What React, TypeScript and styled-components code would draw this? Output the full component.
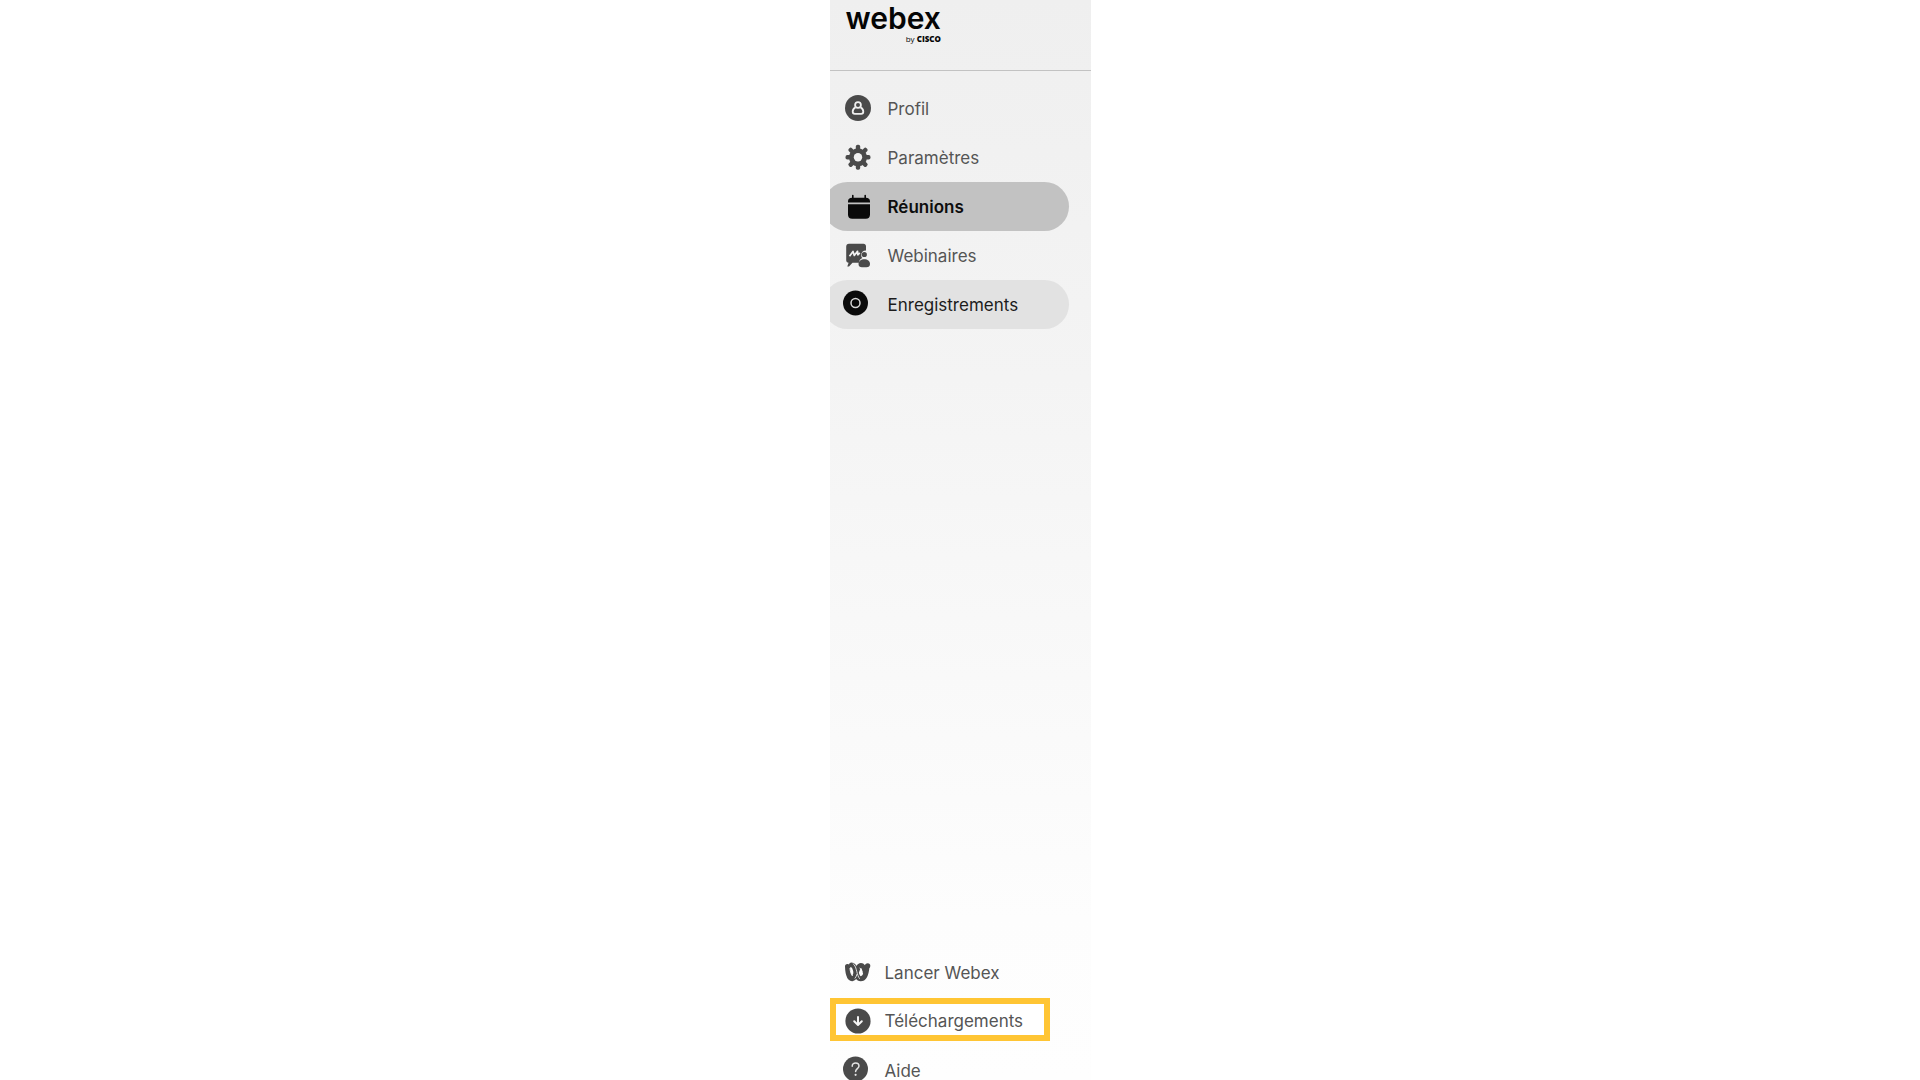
import React from "react";
import styled, { createGlobalStyle } from "styled-components";

const GlobalStyle = createGlobalStyle`
  * { box-sizing: border-box; }
  body {
    margin: 0;
    background: #ffffff;
    font-family: Inter, "Liberation Sans", sans-serif;
  }
`;

const Page = styled.div`
  display: flex;
  justify-content: center;
  height: 100vh;
`;

const Sidebar = styled.aside`
  display: flex;
  flex-direction: column;
  width: 261px;
  height: 100%;
  overflow: hidden;
  background: linear-gradient(#efefef 0%, #f4f4f4 35%, #fdfdfd 85%, #fefefe 100%);
`;

const Header = styled.header`
  flex: none;
  height: 71px;
  padding: 2px 16px 0;
  border-bottom: 1px solid #c2c2c2;
`;

const Logo = styled.a`
  display: inline-flex;
  flex-direction: column;
  align-items: flex-end;
  color: #050505;
  text-decoration: none;
`;

const Brand = styled.span`
  font-size: 30px;
  line-height: 32px;
  font-weight: 600;
`;

const Maker = styled.span`
  font-family: "Open Sans", sans-serif;
  font-size: 8px;
  line-height: 10px;

  b {
    font-weight: 800;
  }
`;

const Nav = styled.nav`
  flex: 1;
  display: flex;
  flex-direction: column;
  justify-content: space-between;
  padding-top: 13px;
  margin-bottom: -15px;
`;

const List = styled.ul`
  list-style: none;
  margin: 0;
  padding: 0;
`;

const tones = {
  plain: { ink: "#555555", icon: "#4a4a4a", fill: "transparent" },
  current: { ink: "#0d0d0d", icon: "#0a0a0a", fill: "#c2c2c2" },
  hover: { ink: "#1c1c1c", icon: "#0a0a0a", fill: "#e2e2e2" },
};

type Tone = keyof typeof tones;

const Item = styled.a<{ $tone: Tone }>`
  display: flex;
  align-items: center;
  gap: 17px;
  height: 49px;
  margin: 0 22px 0 -7px;
  padding: 0 22px;
  border-radius: 25px;
  color: ${(p) => tones[p.$tone].ink};
  background: ${(p) => tones[p.$tone].fill};
  font-size: 17px;
  line-height: 24px;
  font-weight: ${(p) => (p.$tone === "current" ? 600 : 400)};
  text-decoration: none;

  svg {
    flex: none;
    overflow: visible;
    color: ${(p) => tones[p.$tone].icon};
  }
`;

const FooterItem = styled(Item)<{ $marked?: boolean }>`
  gap: 14px;
  ${(p) =>
    p.$marked &&
    `
    height: 43px;
    margin: 1px 41px 5px 0;
    padding: 2px 9px 0;
    border: 6px solid #ffc534;
    border-radius: 0;
    background: #ffffff;
  `}
`;

const Icon = ({ children }: { children: React.ReactNode }) => (
  <svg width="26" height="26" viewBox="0 0 26 26" fill="currentColor" aria-hidden="true">
    {children}
  </svg>
);

const ProfileIcon = () => (
  <Icon>
    <circle cx="13" cy="12" r="13" />
    <g fill="none" stroke="#f0f0f0" strokeWidth="1.8">
      <circle cx="13" cy="9" r="2.9" />
      <path d="M10.300 11.600C8.400 12.500 7.700 14 7.700 15.800c0 1.500.9 2 2.100 2h6.400c1.200 0 2.100-.5 2.100-2 0-1.800-.7-3.300-2.600-4.200" />
    </g>
  </Icon>
);

const GearIcon = () => (
  <Icon>
    {[0, 45, 90, 135].map((angle) => (
      <rect key={angle} x="10.800" y="-.2" width="4.400" height="25" rx="1.800" transform={`rotate(${angle} 13 12.300)`} />
    ))}
    <circle cx="13" cy="12.300" r="9" />
    <circle cx="13" cy="12.300" r="4.200" fill="#f1f1f1" />
  </Icon>
);

const CalendarIcon = () => (
  <Icon>
    <path d="M3 8.500V7.500C3 5 4.500 3.800 7 3.800V1.500a.8.8 0 0 1 1.600 0v2.300h10.800V1.500a.8.8 0 0 1 1.600 0v2.300c2.500 0 4 1.200 4 3.700v1z" />
    <path d="M3 10.200h22v10.300c0 2.700-1.400 4.300-4.200 4.300H7.200C4.400 24.800 3 23.200 3 20.500z" />
  </Icon>
);

const WebinarIcon = () => (
  <Icon>
    <path d="M4 .8h14.500C20 .8 21 1.800 21 3.300v4.200c-3 0-4.800 2-4.800 4.600 0 1.300.4 2.200 1.200 3-2 .9-3.300 2.500-3.400 4.700H7.500L4 23.500H2.300l1.300-3.700C2.200 19.800 1.200 18.800 1.200 17.300V3.800C1.200 1.800 2.200.8 4 .8z" />
    <path d="M4.500 13.300 8 8.500l1.300 4L12.500 8.300l.3 3.500 2-2" fill="none" stroke="#f2f2f2" strokeWidth="1.700" strokeLinejoin="round" />
    <circle cx="19.300" cy="11.500" r="2.600" />
    <path d="M13.500 21c0-3 2.600-4.700 5.800-4.700s5.700 1.700 5.700 4.700c0 2.300-1.400 3.300-3.500 3.300h-4.600c-2.100 0-3.400-1-3.400-3.300z" />
  </Icon>
);

const RecordIcon = () => (
  <Icon>
    <circle cx="10.500" cy="11" r="12.500" />
    <circle cx="10.500" cy="11" r="4.500" fill="none" stroke="#d8d8d8" strokeWidth="1.500" />
  </Icon>
);

const WebexIcon = () => (
  <Icon>
    <g fill="none" stroke="currentColor" strokeWidth="5" strokeLinecap="round">
      <path d="M2.500 6.500c.2 6.500 2 12.300 5 12.300 3.500 0 4-13.300 8.500-13.300 2.500 0 3.300 3 4 6.500" />
      <path d="M6.500 5C9 5 10 8 10.800 11.500 12 16 13 18.800 15.700 18.800c4 0 5.800-6.300 6.300-12" />
    </g>
    <path d="M7.800 3.500c2.500 1.500 3.200 5.200 4 8.100.8 3 1.500 5.500 2.900 7.200M4.900 8c.3 3.500 1.300 7 2.800 8M14.500 8c1.800.5 2.200 2.500 2.900 4.500M9.800 18.500c1.200-1.200 1.800-3 2.300-4.500" fill="none" stroke="#fdfdfd" strokeWidth=".8" />
    <circle cx="22.700" cy="5.800" r="2.600" />
  </Icon>
);

const DownloadIcon = () => (
  <Icon>
    <circle cx="13" cy="13" r="12.600" />
    <path d="M13 9v7.800M9.200 13.200l3.800 3.800 3.800-3.800" fill="none" stroke="#f4f4f4" strokeWidth="2" strokeLinecap="round" strokeLinejoin="round" />
  </Icon>
);

const HelpIcon = () => (
  <Icon>
    <circle cx="10.500" cy="11" r="12.500" />
    <path d="M7.200 8.300c0-2.100 1.500-3.400 3.400-3.400s3.400 1.300 3.400 3.200c0 2.500-3.400 2.700-3.400 5.400" fill="none" stroke="#e4e4e4" strokeWidth="1.500" strokeLinecap="round" />
    <circle cx="10.600" cy="16.800" r="1.100" fill="#e4e4e4" />
  </Icon>
);

const mainItems: { label: string; icon: React.ReactNode; tone: Tone }[] = [
  { label: "Profil", icon: <ProfileIcon />, tone: "plain" },
  { label: "Paramètres", icon: <GearIcon />, tone: "plain" },
  { label: "Réunions", icon: <CalendarIcon />, tone: "current" },
  { label: "Webinaires", icon: <WebinarIcon />, tone: "plain" },
  { label: "Enregistrements", icon: <RecordIcon />, tone: "hover" },
];

const footerItems = [
  { label: "Lancer Webex", icon: <WebexIcon />, marked: false },
  { label: "Téléchargements", icon: <DownloadIcon />, marked: true },
  { label: "Aide", icon: <HelpIcon />, marked: false },
];

export default function App() {
  return (
    <>
      <GlobalStyle />
      <Page>
        <Sidebar>
          <Header>
            <Logo href="#">
              <Brand>webex</Brand>
              <Maker>
                by <b>CISCO</b>
              </Maker>
            </Logo>
          </Header>
          <Nav>
            <List>
              {mainItems.map((item) => (
                <li key={item.label}>
                  <Item href="#" $tone={item.tone} aria-current={item.tone === "current" ? "page" : undefined}>
                    {item.icon}
                    {item.label}
                  </Item>
                </li>
              ))}
            </List>
            <List>
              {footerItems.map((item) => (
                <li key={item.label}>
                  <FooterItem href="#" $tone="plain" $marked={item.marked}>
                    {item.icon}
                    {item.label}
                  </FooterItem>
                </li>
              ))}
            </List>
          </Nav>
        </Sidebar>
      </Page>
    </>
  );
}
